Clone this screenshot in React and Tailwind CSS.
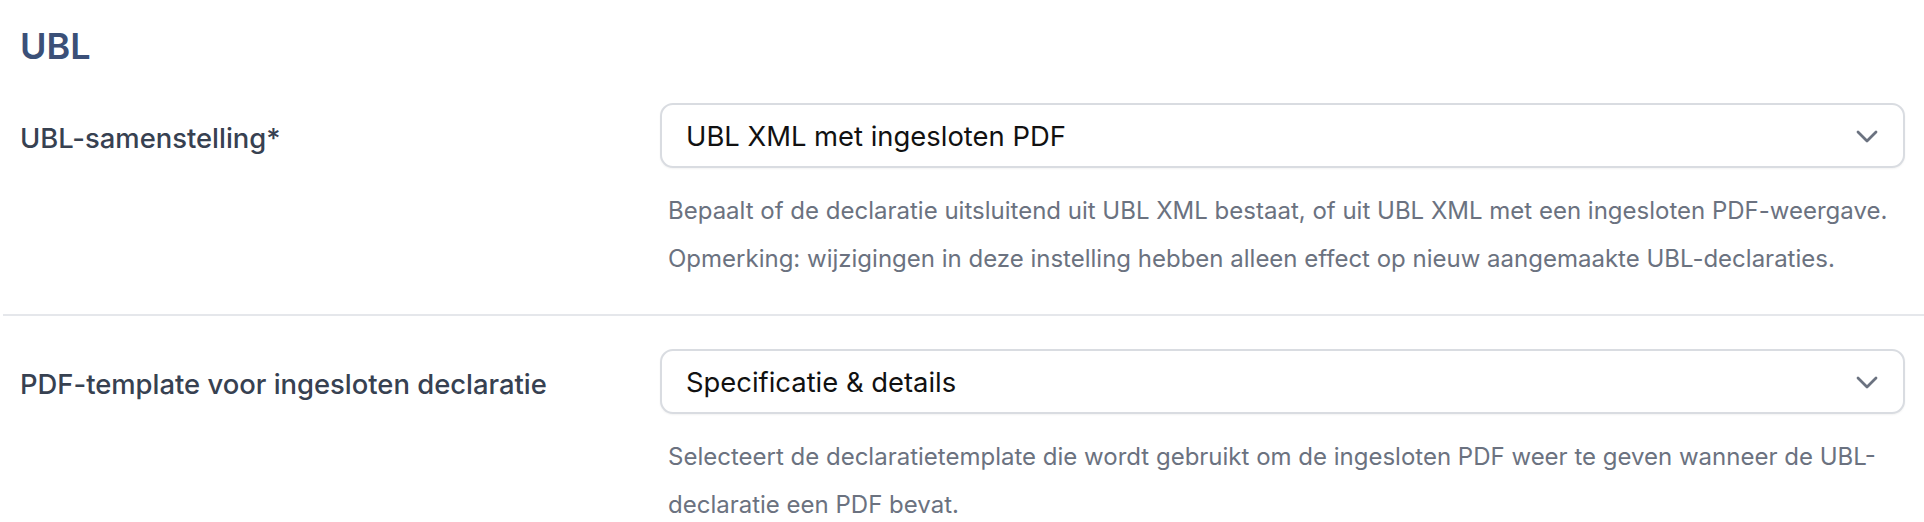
import React from 'react';

const velden = [
    {
        label: 'UBL-samenstelling*',
        waarde: 'UBL XML met ingesloten PDF',
        hulp: [
            'Bepaalt of de declaratie uitsluitend uit UBL XML bestaat, of uit UBL XML met een ingesloten PDF-weergave.',
            'Opmerking: wijzigingen in deze instelling hebben alleen effect op nieuw aangemaakte UBL-declaraties.'
        ]
    },
    {
        label: 'PDF-template voor ingesloten declaratie',
        waarde: 'Specificatie & details',
        hulp: [
            'Selecteert de declaratietemplate die wordt gebruikt om de ingesloten PDF weer te geven wanneer de UBL-declaratie een PDF bevat.'
        ]
    }
];

const Chevron = () => (
    <svg width="40" height="40" viewBox="0 0 20 20" fill="none" className="text-[#6b7280]">
        <path d="M5.5 8L10 12.5L14.5 8" stroke="currentColor" strokeWidth="1.4" strokeLinecap="round" strokeLinejoin="round" />
    </svg>
);

// Een rij met label links en select + hulptekst rechts
const Veld = ({ veld }) => {
    const { label, waarde, hulp } = veld;

    return (
        <div className="grid grid-cols-[640px_1fr] pl-[20px] pr-[19px]">
            <label className="mt-[17px] text-[27.4px] leading-[36px] font-medium text-[#374151]">
                {label}
            </label>
            <div>
                <button
                    type="button"
                    className="flex h-[65px] w-full items-center justify-between rounded-[13px] border-2 border-[#d9dce1] bg-white pl-[24px] pr-[16px] text-left shadow-[0_1px_2px_rgba(0,0,0,0.05)]"
                >
                    <span className="text-[27.4px] leading-[36px] text-[#111111]">{waarde}</span>
                    <Chevron />
                </button>
                <div className="mt-[19px] pl-[8px] text-[24px] leading-[48px] text-[#6b7280]">
                    {hulp.map(regel => (
                        <p key={regel}>{regel}</p>
                    ))}
                </div>
            </div>
        </div>
    );
};

const App = () => {
    return (
        <div className="h-[522px] w-full overflow-hidden bg-white font-['Inter','Noto_Sans',sans-serif]">
            <h2 className="pl-[20px] pt-[22px] text-[36px] leading-[48px] font-semibold text-[#3b5078]">UBL</h2>

            <div className="pt-[33px] pb-[31px]">
                <Veld veld={velden[0]} />
            </div>

            <div className="ml-[3px] h-[2px] bg-[#e5e7eb]" />

            <div className="pt-[33px]">
                <Veld veld={velden[1]} />
            </div>
        </div>
    );
};

export default App;
